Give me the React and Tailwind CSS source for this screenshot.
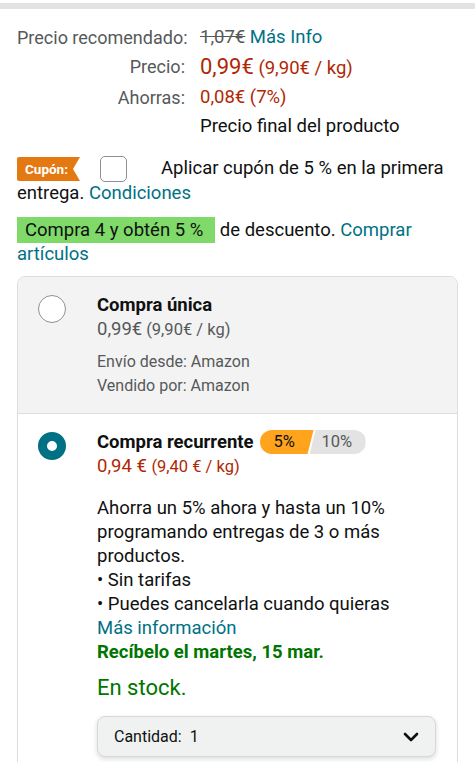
import { ChevronDown } from 'lucide-react';

export default function App() {
  return (
    <div className="w-[475px] min-h-[762px] bg-white text-[#0F1111] [font-family:Roboto,'Noto_Sans',sans-serif] overflow-hidden">
      <div className="h-[3px]" />
      <div className="h-[6px] bg-[#e3e3e3]" />
      <div className="px-[17px] pt-[14px] text-[18.5px]">
        <div className="grid grid-cols-[168px_1fr] gap-x-[15px] leading-[29px]">
          <div className="text-right text-[18px] text-[#565959] whitespace-nowrap">Precio recomendado:</div>
          <div>
            <span className="line-through text-[#565959]">1,07€</span>{' '}
            <span className="text-[#007185]">Más Info</span>
          </div>
          <div className="text-right text-[18px] text-[#565959]">Precio:</div>
          <div className="text-[#B12704]">
            <span className="text-[22px]">0,99€</span> <span>(9,90€ / kg)</span>
          </div>
          <div className="text-right text-[18px] text-[#565959]">Ahorras:</div>
          <div className="text-[#B12704]">0,08€ (7%)</div>
          <div />
          <div>Precio final del producto</div>
        </div>

        <p className="mt-[15px] leading-[24px]">
          <span className="inline-block align-middle h-[24px] w-[63px] pl-[8px] bg-[#E47911] text-white text-[13.5px] font-bold leading-[24px] rounded-l-[2px] [clip-path:polygon(0_0,100%_0,calc(100%-7px)_50%,100%_100%,0_100%)]">
            Cupón:
          </span>
          <span className="inline-block align-middle -my-[2px] ml-[20px] mr-[34px] h-[26px] w-[27px] rounded-[5px] border-[1.5px] border-[#8d9096] bg-white" />
          Aplicar cupón de 5 % en la primera entrega.{' '}
          <span className="text-[#007185]">Condiciones</span>
        </p>

        <p className="mt-[13px] leading-[24px]">
          <span className="bg-[#7FDA69] pl-[8px] pr-[12px] py-[2px]">Compra 4 y obtén 5 %</span> de descuento.{' '}
          <span className="text-[#007185]">Comprar artículos</span>
        </p>
      </div>

      <div className="mx-[17px] mt-[10px] border border-[#dddddd] rounded-t-[8px] overflow-hidden pb-[40px]">
        <div className="flex bg-[#f3f3f3] border-b border-[#dddddd] pt-[16px] pb-[15px]">
          <div className="ml-[20px] mt-[2px] h-[28px] w-[28px] shrink-0 rounded-full border-[1.5px] border-[#8d9096] bg-white" />
          <div className="ml-[31px] leading-[24px]">
            <div className="text-[18.5px] font-bold">Compra única</div>
            <div className="text-[#565959]">
              <span className="text-[18.5px]">0,99€</span> <span className="text-[16.5px]">(9,90€ / kg)</span>
            </div>
            <div className="mt-[8px] text-[16px] text-[#565959]">Envío desde: Amazon</div>
            <div className="text-[16px] text-[#565959]">Vendido por: Amazon</div>
          </div>
        </div>

        <div className="flex pt-[16px] pr-[21px]">
          <div className="ml-[20px] mt-[2px] h-[28px] w-[28px] shrink-0 rounded-full border-[9px] border-[#007185] bg-white" />
          <div className="ml-[31px] flex-1 leading-[24px] text-[18.5px]">
            <div className="flex items-center">
              <span className="font-bold">Compra recurrente</span>
              <span className="ml-[6px] inline-flex h-[24px] rounded-full overflow-hidden text-[16.5px] leading-[24px]">
                <span className="w-[54px] pl-[14px] bg-[#FFA41C] text-[#0F1111] [clip-path:polygon(0_0,100%_0,calc(100%-6px)_100%,0_100%)]">
                  5%
                </span>
                <span className="-ml-[4px] w-[56px] pl-[12px] bg-[#e3e3e3] text-[#565959] [clip-path:polygon(6px_0,100%_0,100%_100%,0_100%)]">
                  10%
                </span>
              </span>
            </div>
            <div className="text-[#B12704]">
              <span>0,94 €</span> <span className="text-[16.5px]">(9,40 € / kg)</span>
            </div>
            <div className="mt-[17px]">Ahorra un 5% ahora y hasta un 10% programando entregas de 3 o más productos.</div>
            <div>• Sin tarifas</div>
            <div>• Puedes cancelarla cuando quieras</div>
            <div className="text-[#007185]">Más información</div>
            <div className="font-bold text-[#007600]">Recíbelo el martes, 15 mar.</div>
            <div className="mt-[10px] text-[22px] leading-[28px] text-[#007600]">En stock.</div>
            <div className="mt-[14px] flex h-[41px] items-center justify-between rounded-[8px] border border-[#D5D9D9] bg-[#F0F2F2] pl-[16px] pr-[12px] shadow-[0_2px_5px_rgba(15,17,17,0.15)]">
              <span className="text-[16px]">Cantidad:&nbsp; 1</span>
              <ChevronDown size={24} strokeWidth={2.6} className="text-[#0F1111]" />
            </div>
          </div>
        </div>
      </div>
    </div>
  );
}
